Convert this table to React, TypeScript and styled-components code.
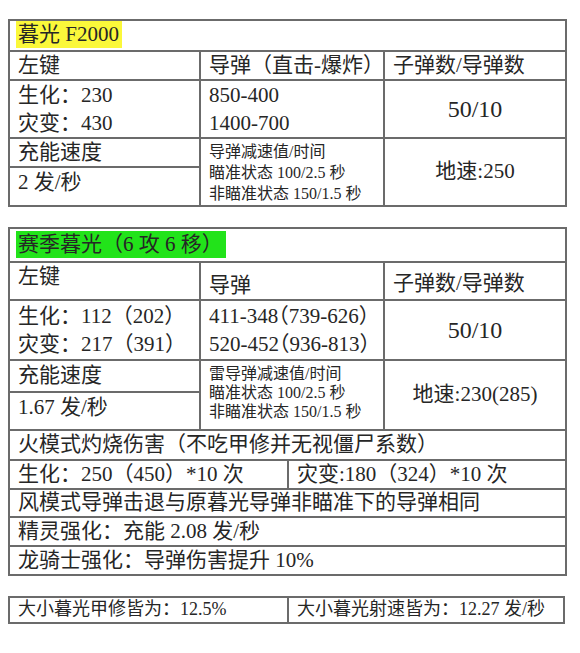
import React from "react";
import styled, { createGlobalStyle } from "styled-components";

const GlobalStyle = createGlobalStyle`
  html, body {
    margin: 0;
    padding: 0;
    background: #ffffff;
  }
  body {
    font-family: "Liberation Serif", "Noto Sans CJK SC", serif;
    color: #262626;
  }
`;

const Page = styled.div`
  display: flex;
  flex-direction: column;
  gap: 20px;
  padding: 19px 0 0 8px;
`;

const Sheet = styled.table`
  border-collapse: collapse;
  table-layout: fixed;
  border: 2px solid #6b6b6b;
`;

const Row = styled.tr<{ $h: number }>`
  height: ${(p) => p.$h}px;
`;

const Cell = styled.td<{
  $align?: "left" | "center";
  $valign?: "top" | "middle" | "bottom";
  $size?: number;
  $pt?: number;
  $pb?: number;
}>`
  border: 2px solid #6b6b6b;
  padding: ${(p) => p.$pt ?? 0}px 8px ${(p) => p.$pb ?? 0}px 8px;
  text-align: ${(p) => p.$align ?? "left"};
  vertical-align: ${(p) => p.$valign ?? "middle"};
  font-size: ${(p) => p.$size ?? 21}px;
  line-height: 1.2;
  white-space: nowrap;
  overflow: hidden;
`;

const TitleCell = styled.td<{ $pt: number }>`
  border: 2px solid #6b6b6b;
  padding: ${(p) => p.$pt}px 0 0 6px;
  vertical-align: top;
  font-size: 21px;
`;

const Mark = styled.span<{ $bg: string }>`
  display: inline-block;
  background: ${(p) => p.$bg};
  line-height: 27px;
  padding: 0 3px 0 2px;
`;

const Lines = styled.div<{ $lh: number }>`
  line-height: ${(p) => p.$lh}px;
`;

const Half = styled.span`
  font-feature-settings: "halt";
`;

function Cols({ widths }: { widths: number[] }) {
  return (
    <colgroup>
      {widths.map((w, i) => (
        <col key={i} style={{ width: w }} />
      ))}
    </colgroup>
  );
}

export default function App() {
  return (
    <>
      <GlobalStyle />
      <Page>
        <Sheet style={{ width: 557 }}>
          <Cols widths={[191, 184, 182]} />
          <tbody>
            <Row $h={31}>
              <TitleCell colSpan={3} $pt={0}>
                <Mark $bg="#fbf83a">暮光 F2000</Mark>
              </TitleCell>
            </Row>
            <Row $h={29}>
              <Cell>左键</Cell>
              <Cell>导弹（直击-爆炸）</Cell>
              <Cell>子弹数/导弹数</Cell>
            </Row>
            <Row $h={57}>
              <Cell>
                <Lines $lh={28}>
                  <div>生化：230</div>
                  <div>灾变：430</div>
                </Lines>
              </Cell>
              <Cell>
                <Lines $lh={28}>
                  <div>850-400</div>
                  <div>1400-700</div>
                </Lines>
              </Cell>
              <Cell $align="center" $size={24}>
                50/10
              </Cell>
            </Row>
            <Row $h={29}>
              <Cell>充能速度</Cell>
              <Cell rowSpan={2} $size={16}>
                <Lines $lh={21}>
                  <div>导弹减速值/时间</div>
                  <div>瞄准状态 100/2.5 秒</div>
                  <div>非瞄准状态 150/1.5 秒</div>
                </Lines>
              </Cell>
              <Cell rowSpan={2} $align="center">
                地速:250
              </Cell>
            </Row>
            <Row $h={39}>
              <Cell $pb={8}>2 发/秒</Cell>
            </Row>
          </tbody>
        </Sheet>

        <Sheet style={{ width: 557 }}>
          <Cols widths={[191, 88, 96, 182]} />
          <tbody>
            <Row $h={34}>
              <TitleCell colSpan={4} $pt={2}>
                <Mark $bg="#22e31a">赛季暮光（6 攻 6 移）</Mark>
              </TitleCell>
            </Row>
            <Row $h={38}>
              <Cell $valign="top" $pt={1}>
                左键
              </Cell>
              <Cell colSpan={2} $pt={9}>
                导弹
              </Cell>
              <Cell $pt={5}>子弹数/导弹数</Cell>
            </Row>
            <Row $h={60}>
              <Cell>
                <Lines $lh={28.5}>
                  <div>生化：112（202）</div>
                  <div>灾变：217（391）</div>
                </Lines>
              </Cell>
              <Cell colSpan={2}>
                <Lines $lh={28.5}>
                  <div>
                    411-348<Half>（</Half>739-626<Half>）</Half>
                  </div>
                  <div>
                    520-452<Half>（</Half>936-813<Half>）</Half>
                  </div>
                </Lines>
              </Cell>
              <Cell $align="center" $size={24}>
                50/10
              </Cell>
            </Row>
            <Row $h={32}>
              <Cell>充能速度</Cell>
              <Cell colSpan={2} rowSpan={2} $size={16} $pb={5}>
                <Lines $lh={19}>
                  <div>雷导弹减速值/时间</div>
                  <div>瞄准状态 100/2.5 秒</div>
                  <div>非瞄准状态 150/1.5 秒</div>
                </Lines>
              </Cell>
              <Cell rowSpan={2} $align="center">
                地速:230(285)
              </Cell>
            </Row>
            <Row $h={38}>
              <Cell $pb={7}>1.67 发/秒</Cell>
            </Row>
            <Row $h={30}>
              <Cell colSpan={4}>火模式灼烧伤害（不吃甲修并无视僵尸系数）</Cell>
            </Row>
            <Row $h={29}>
              <Cell colSpan={2}>生化：250（450）*10 次</Cell>
              <Cell colSpan={2}>灾变:180（324）*10 次</Cell>
            </Row>
            <Row $h={28}>
              <Cell colSpan={4}>风模式导弹击退与原暮光导弹非瞄准下的导弹相同</Cell>
            </Row>
            <Row $h={29}>
              <Cell colSpan={4}>精灵强化：充能 2.08 发/秒</Cell>
            </Row>
            <Row $h={29}>
              <Cell colSpan={4}>龙骑士强化：导弹伤害提升 10%</Cell>
            </Row>
          </tbody>
        </Sheet>

        <Sheet style={{ width: 555 }}>
          <Cols widths={[279, 276]} />
          <tbody>
            <Row $h={26}>
              <Cell $size={18}>大小暮光甲修皆为：12.5%</Cell>
              <Cell $size={18}>大小暮光射速皆为：12.27 发/秒</Cell>
            </Row>
          </tbody>
        </Sheet>
      </Page>
    </>
  );
}
